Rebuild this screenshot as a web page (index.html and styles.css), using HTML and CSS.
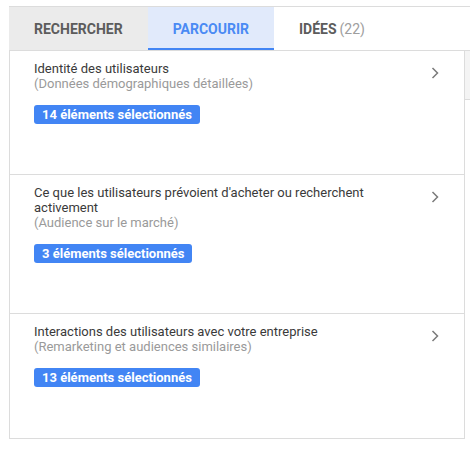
FILE: index.html
```html
<!DOCTYPE html>
<html lang="fr">
<head>
    <meta charset="UTF-8">
    <meta name="viewport" content="width=device-width, initial-scale=1.0">
    <title>Parcourir les audiences</title>
    <link rel="stylesheet" href="styles.css">
</head>
<body>
    <div class="layout">
        <div class="panel">
            <div class="tabs">
                <div class="tab">Rechercher</div>
                <div class="tab active">Parcourir</div>
                <div class="tab">Idées <span class="count">(22)</span></div>
            </div>
            <div class="list">
                <div class="item">
                    <div class="item-text">
                        <div class="title">Identité des utilisateurs</div>
                        <div class="sub">(Données démographiques détaillées)</div>
                        <span class="badge">14 éléments sélectionnés</span>
                    </div>
                    <svg class="chevron" width="8" height="12" viewBox="0 0 8 12"><polyline points="1.5,1 6.5,6 1.5,11" fill="none" stroke="#7a7a7a" stroke-width="1.5"/></svg>
                </div>
                <div class="item">
                    <div class="item-text">
                        <div class="title">Ce que les utilisateurs prévoient d'acheter ou recherchent activement</div>
                        <div class="sub">(Audience sur le marché)</div>
                        <span class="badge">3 éléments sélectionnés</span>
                    </div>
                    <svg class="chevron" width="8" height="12" viewBox="0 0 8 12"><polyline points="1.5,1 6.5,6 1.5,11" fill="none" stroke="#7a7a7a" stroke-width="1.5"/></svg>
                </div>
                <div class="item">
                    <div class="item-text">
                        <div class="title">Interactions des utilisateurs avec votre entreprise</div>
                        <div class="sub">(Remarketing et audiences similaires)</div>
                        <span class="badge">13 éléments sélectionnés</span>
                    </div>
                    <svg class="chevron" width="8" height="12" viewBox="0 0 8 12"><polyline points="1.5,1 6.5,6 1.5,11" fill="none" stroke="#7a7a7a" stroke-width="1.5"/></svg>
                </div>
            </div>
        </div>
        <div class="side">
            <div class="side-top"></div>
            <div class="side-head"></div>
            <div class="side-body"></div>
        </div>
    </div>
</body>
</html>
```

FILE: styles.css
```css
body {
    margin: 0;
    font-family: Roboto, "Liberation Sans", Arial, sans-serif;
    background: #fff;
}
.layout {
    display: flex;
    margin-top: 6px;
    margin-left: 9px;
    border-top: 1px solid #dcdcdc;
}
.panel {
    width: 456px;
    flex-shrink: 0;
}
.tabs {
    display: flex;
    height: 43px;
    border-bottom: 1px solid #dcdcdc;
}
.tab {
    padding: 0 25px;
    display: flex;
    align-items: center;
    font-size: 14px;
    font-weight: bold;
    text-transform: uppercase;
    color: #5c5c5c;
}
.tab:first-child {
    background: #ebebeb;
}
.tab.active {
    background: #e1eafb;
    color: #4a8af4;
    box-shadow: inset 0 -2px 0 #4285f4;
}
.count {
    font-weight: normal;
    color: #9e9e9e;
    margin-left: 3px;
}
.list {
    border-left: 1px solid #dcdcdc;
    border-right: 1px solid #dcdcdc;
    border-bottom: 1px solid #dcdcdc;
}
.item {
    display: flex;
    align-items: flex-start;
    padding: 10px 25px 50px 24px;
    border-bottom: 1px solid #dcdcdc;
}
.item:last-child {
    border-bottom: none;
    padding-bottom: 51px;
}
.item-text {
    flex: 1;
    padding-right: 30px;
    font-size: 13px;
    line-height: 15px;
}
.title {
    color: #3a3a3a;
}
.sub {
    color: #9a9a9a;
}
.badge {
    display: inline-block;
    margin-top: 14px;
    padding: 0 8px;
    line-height: 19px;
    border-radius: 3px;
    background: #4285f4;
    color: #fff;
    font-weight: bold;
}
.chevron {
    margin-top: 6px;
    flex-shrink: 0;
}
.side {
    flex: 1;
}
.side-top {
    height: 43px;
    border-bottom: 1px solid #dcdcdc;
}
.side-head {
    height: 48px;
    background: #f4f4f4;
    border-bottom: 1px solid #dcdcdc;
}
```
